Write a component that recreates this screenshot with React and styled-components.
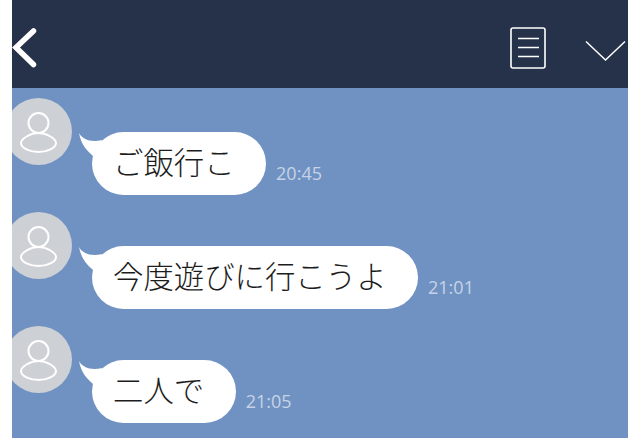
import React from "react";
import styled, { createGlobalStyle } from "styled-components";

const Global = createGlobalStyle`
  html, body { margin: 0; padding: 0; background: #fff; }
  body { width: 640px; height: 440px; overflow: hidden; }
`;

const Screen = styled.div`
  width: 616px;
  height: 438px;
  margin: 0 12px;
  background: #7092c2;
  overflow: hidden;
  display: flex;
  flex-direction: column;
`;

const Header = styled.header`
  box-sizing: border-box;
  height: 88px;
  flex: none;
  padding-top: 7px;
  background: #253249;
  display: flex;
  align-items: center;
  justify-content: space-between;
`;

const Actions = styled.div`
  display: flex;
  align-items: center;
  gap: 38px;
  margin-right: 1px;
`;

const IconSvg = styled.svg`
  display: block;
  flex: none;
`;

const ChevronSvg = styled(IconSvg)`
  margin-top: 6px;
`;

const Feed = styled.main`
  display: flex;
  flex-direction: column;
  gap: 47px;
  padding-top: 10px;
`;

const Row = styled.div`
  display: flex;
  align-items: flex-end;
  height: 67px;
  margin-left: -7px;
`;

const Avatar = styled.svg`
  width: 67px;
  height: 67px;
  flex: none;
  align-self: flex-start;
`;

const Bubble = styled.div`
  position: relative;
  height: 63px;
  margin-left: 20px;
  margin-bottom: -30px;
  padding: 0 31.500px 0 21px;
  border-radius: 32px;
  background: #fff;
  color: #1c1c1c;
  font-family: "Noto Sans CJK JP", "Noto Sans", sans-serif;
  font-weight: 300;
  font-size: 30.400px;
  line-height: 58px;
  white-space: nowrap;
`;

const Tail = styled.svg`
  position: absolute;
  left: -14px;
  top: 0;
  width: 30px;
  height: 30px;
`;

const Time = styled.time`
  margin-left: 10px;
  margin-bottom: -20px;
  color: #c6d3e7;
  font-family: "Open Sans", sans-serif;
  font-size: 18px;
  line-height: 24px;
`;

const BackIcon = () => (
  <IconSvg width="26" height="42" viewBox="0 0 26 42">
    <path d="M21.500 4 4 20.500l17.500 17" fill="none" stroke="#fff" strokeWidth="5.500" strokeLinecap="round" strokeLinejoin="miter" />
  </IconSvg>
);

const MenuIcon = () => (
  <IconSvg width="37" height="42" viewBox="0 0 37 42">
    <rect x="1" y="1" width="34" height="40" rx="2" fill="none" stroke="#fff" strokeWidth="1.600" />
    <path d="M8 11.500h21M8 20.500h21M8 29.500h21" stroke="#fff" strokeWidth="1.600" />
  </IconSvg>
);

const ChevronIcon = () => (
  <ChevronSvg width="42" height="24" viewBox="0 0 42 24">
    <path d="M1 2.500 20.500 21 40 2.500" fill="none" stroke="#fff" strokeWidth="1.500" />
  </ChevronSvg>
);

const PersonAvatar = () => (
  <Avatar viewBox="0 0 67 67">
    <circle cx="33.500" cy="33.500" r="33.500" fill="#cdd0d5" />
    <circle cx="33.500" cy="25" r="10" fill="none" stroke="#fff" strokeWidth="2" />
    <path
      d="M33.500 35C42 35 51 41 51 45C51 50 42 54 33.500 54C25 54 16 50 16 45C16 41 25 35 33.500 35Z"
      fill="none"
      stroke="#fff"
      strokeWidth="2"
    />
  </Avatar>
);

const messages = [
  { text: "ご飯行こ", time: "20:45" },
  { text: "今度遊びに行こうよ", time: "21:01" },
  { text: "二人で", time: "21:05" },
];

export default function App() {
  return (
    <>
      <Global />
      <Screen>
        <Header>
          <BackIcon />
          <Actions>
            <MenuIcon />
            <ChevronIcon />
          </Actions>
        </Header>
        <Feed>
          {messages.map((m) => (
            <Row key={m.time}>
              <PersonAvatar />
              <Bubble>
                <Tail viewBox="0 0 30 30">
                  <path d="M1 1C4 7 13 11 24 8L18 26C9 20 3 12 1 1Z" fill="#fff" />
                </Tail>
                {m.text}
              </Bubble>
              <Time>{m.time}</Time>
            </Row>
          ))}
        </Feed>
      </Screen>
    </>
  );
}
